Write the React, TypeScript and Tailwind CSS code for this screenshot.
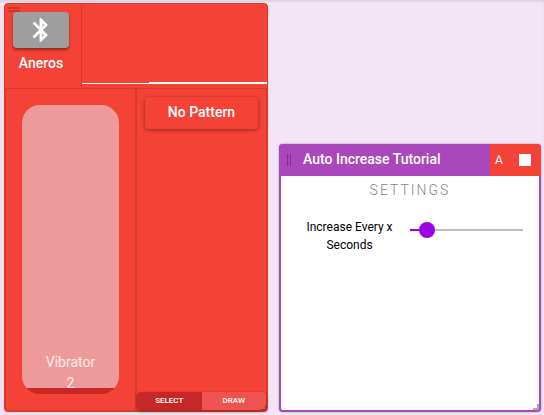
import { useState } from "react";

function ResizeCorner({ className }: { className: string }) {
  return <span aria-hidden="true" className={`absolute right-0 bottom-0 h-1.5 w-1.5 border-r-2 border-b-2 ${className}`} />;
}

function DevicePanel() {
  const [level, setLevel] = useState(98);
  return (
    <section className="relative flex flex-col rounded border border-[#d8392d] bg-[#f44336] text-white shadow-sm">
      <header className="flex h-[84px]">
        <div className="relative flex w-[77px] shrink-0 flex-col items-center border-r border-[#d8392d] pt-2 pr-1">
          <span aria-hidden="true" className="absolute top-[3px] left-[3px] h-[5px] w-3 border-y-2 border-[#cf372c]" />
          <button
            type="button"
            aria-label="Bluetooth"
            className="relative flex h-9 w-14 items-center justify-center rounded bg-[#9e9e9e] shadow-[0_2px_3px_rgba(0,0,0,0.4)]"
          >
            <svg viewBox="0 0 24 24" className="h-7 w-7" fill="currentColor" stroke="currentColor" strokeWidth="0.4" aria-hidden="true">
              <path d="M17.71 7.71L12 2h-1v7.59L6.41 5 5 6.41 10.59 12 5 17.59 6.41 19 11 14.41V22h1l5.71-5.71-4.3-4.29 4.3-4.29zM13 5.83l1.88 1.88L13 9.59V5.83zm1.88 10.46L13 18.17v-3.76l1.88 1.88z" />
            </svg>
          </button>
          <h2 className="mt-1 text-sm leading-[22px] font-medium">Aneros</h2>
        </div>
        <div className="flex flex-1 items-end pb-1">
          <div className="h-px flex-[67] bg-white" />
          <div className="h-0.5 flex-[118] bg-white" />
        </div>
      </header>

      <div className="grid flex-1 grid-cols-2">
        <div className="border border-[#d8392d] p-4">
          <div className="relative">
            <input
              id="vibrator"
              type="range"
              min={0}
              max={100}
              value={level}
              onChange={(e) => setLevel(Number(e.target.value))}
              className="block h-[289px] w-full appearance-none rounded-[18px] [direction:rtl] [writing-mode:vertical-lr] [&::-webkit-slider-thumb]:h-px [&::-webkit-slider-thumb]:w-px [&::-webkit-slider-thumb]:appearance-none"
              style={{ background: `linear-gradient(to bottom, #ef9a9a ${level}%, #c62828 ${level}%)` }}
            />
            <label htmlFor="vibrator" className="pointer-events-none absolute inset-x-0 bottom-0 text-center text-sm leading-[21px] text-white/80">
              Vibrator
              <br />2
            </label>
          </div>
        </div>
        <div className="flex flex-col justify-between border border-[#d8392d]">
          <div className="px-2 pt-2">
            <button type="button" className="h-8 w-full rounded pb-0.5 text-sm font-medium shadow-[0_1px_4px_rgba(0,0,0,0.4)]">
              No Pattern
            </button>
          </div>
          <div className="flex overflow-hidden rounded shadow-[0_1px_3px_rgba(0,0,0,0.4)]">
            <button type="button" className="h-[18px] flex-1 bg-[#c62828] text-[8px] font-medium">
              SELECT
            </button>
            <button type="button" className="h-[18px] flex-1 bg-[#ef5350] text-[8px] font-medium">
              DRAW
            </button>
          </div>
        </div>
      </div>
      <ResizeCorner className="border-[#a5382f]" />
    </section>
  );
}

function TutorialPanel() {
  const [seconds, setSeconds] = useState(9);
  const fill = `${7 + seconds * 0.86}%`;
  return (
    <section className="relative mt-[141px] flex flex-col rounded border-2 border-t-0 border-[#ab47bc] bg-white shadow-[0_0_2px_rgba(0,0,0,0.4)]">
      <header className="-mx-0.5 flex h-8 overflow-hidden rounded-t bg-[#ab47bc] text-white">
        <span aria-hidden="true" className="mt-2.5 ml-2 h-3 w-1 shrink-0 border-x border-[#7b3388]" />
        <h2 className="ml-3 flex-1 text-sm leading-[31px] font-medium whitespace-nowrap">Auto Increase Tutorial</h2>
        <div className="flex w-[51px] items-center bg-[#f44336]">
          <button type="button" className="w-[18px] text-xs">
            A
          </button>
          <button type="button" aria-label="Stop" className="flex flex-1 justify-center">
            <span className="h-3 w-3 bg-white" />
          </button>
        </div>
      </header>
      <h3 className="mt-1 text-center text-sm leading-5 font-light tracking-[2px] text-[#858585]">SETTINGS</h3>
      <div className="mt-[18px] grid grid-cols-2 px-4 text-xs text-black">
        <label htmlFor="seconds" className="pr-2 text-center leading-[18px]">
          Increase Every x Seconds
        </label>
        <div className="flex items-center pb-3">
          <input
            id="seconds"
            type="range"
            min={0}
            max={100}
            value={seconds}
            onChange={(e) => setSeconds(Number(e.target.value))}
            className="h-0.5 w-full appearance-none [&::-webkit-slider-thumb]:h-4 [&::-webkit-slider-thumb]:w-4 [&::-webkit-slider-thumb]:appearance-none [&::-webkit-slider-thumb]:rounded-full [&::-webkit-slider-thumb]:bg-[#9c00e5]"
            style={{ background: `linear-gradient(to right, #9c00e5 ${fill}, #bdbdbd ${fill})` }}
          />
        </div>
      </div>
      <ResizeCorner className="border-[#a8a8a8]" />
    </section>
  );
}

export default function App() {
  return (
    <main className="grid min-h-screen grid-cols-[264fr_262fr] gap-[11px] bg-[#f3e5f5] pt-[3px] pr-[3px] pb-1 pl-1 font-[Roboto,sans-serif] shadow-[inset_0_2px_2px_rgba(0,0,0,0.08)]">
      <DevicePanel />
      <TutorialPanel />
    </main>
  );
}
